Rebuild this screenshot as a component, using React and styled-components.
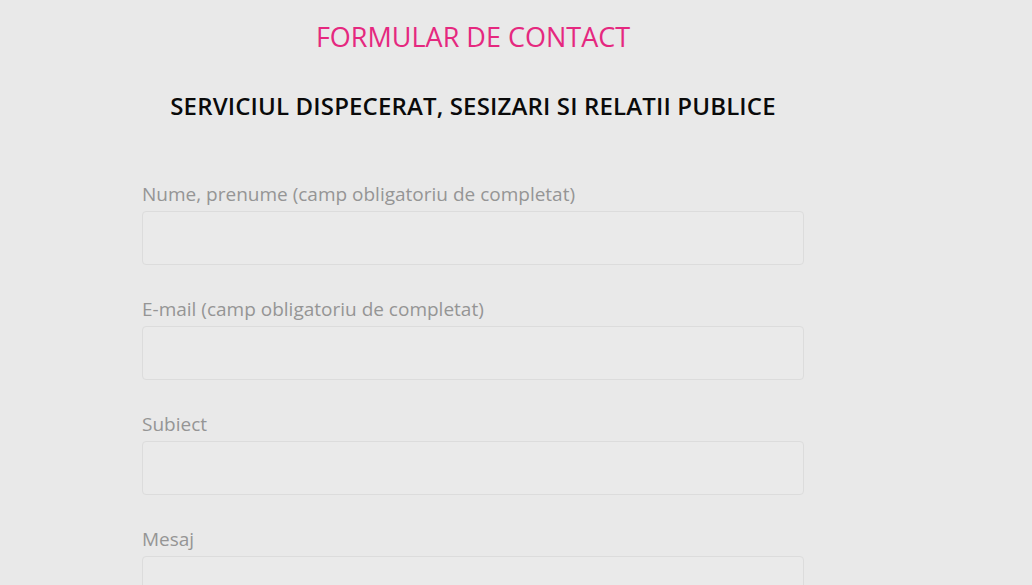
import React from 'react';
import styled, { createGlobalStyle } from 'styled-components';

const GlobalStyle = createGlobalStyle`
  html, body {
    margin: 0;
    padding: 0;
    background: #e9e9e9;
    font-family: "Open Sans", "Liberation Sans", sans-serif;
  }
`;

const Page = styled.div`
  width: 662px;
  margin-left: 142px;
  display: flex;
  flex-direction: column;
`;

const Title = styled.h1`
  margin: 19px 0 0 0;
  font-size: 27px;
  line-height: 36px;
  font-weight: 400;
  color: #e5287f;
  text-align: center;
`;

const Subtitle = styled.h2`
  margin: 37px 0 0 0;
  font-size: 24px;
  line-height: 28px;
  font-weight: 600;
  color: #0a0a0a;
  text-align: center;
  letter-spacing: 0.15px;
`;

const Form = styled.form`
  display: flex;
  flex-direction: column;
  margin-top: 61px;
`;

const FormItem = styled.div`
  display: flex;
  flex-direction: column;
  margin-bottom: 31px;
`;

const Label = styled.label`
  font-size: 19px;
  line-height: 26px;
  color: #959595;
  margin-bottom: 4px;
`;

const Input = styled.input`
  box-sizing: border-box;
  height: ${({ $tall }) => ($tall ? '120px' : '54px')};
  border: 1px solid #dcdcdc;
  border-radius: 4px;
  background: #eaeaea;
  outline: 0;
  padding: 0 12px;
  font-family: inherit;
  font-size: 16px;
`;

const fields = [
  { label: 'Nume, prenume (camp obligatoriu de completat)', name: 'nume' },
  { label: 'E-mail (camp obligatoriu de completat)', name: 'email' },
  { label: 'Subiect', name: 'subiect' },
  { label: 'Mesaj', name: 'mesaj', tall: true },
];

const App = () => (
  <>
    <GlobalStyle />
    <Page>
      <Title>FORMULAR DE CONTACT</Title>
      <Subtitle>SERVICIUL DISPECERAT, SESIZARI SI RELATII PUBLICE</Subtitle>
      <Form>
        {fields.map((f) => (
          <FormItem key={f.name}>
            <Label htmlFor={f.name}>{f.label}</Label>
            <Input id={f.name} name={f.name} type="text" $tall={f.tall} />
          </FormItem>
        ))}
      </Form>
    </Page>
  </>
);

export default App;
